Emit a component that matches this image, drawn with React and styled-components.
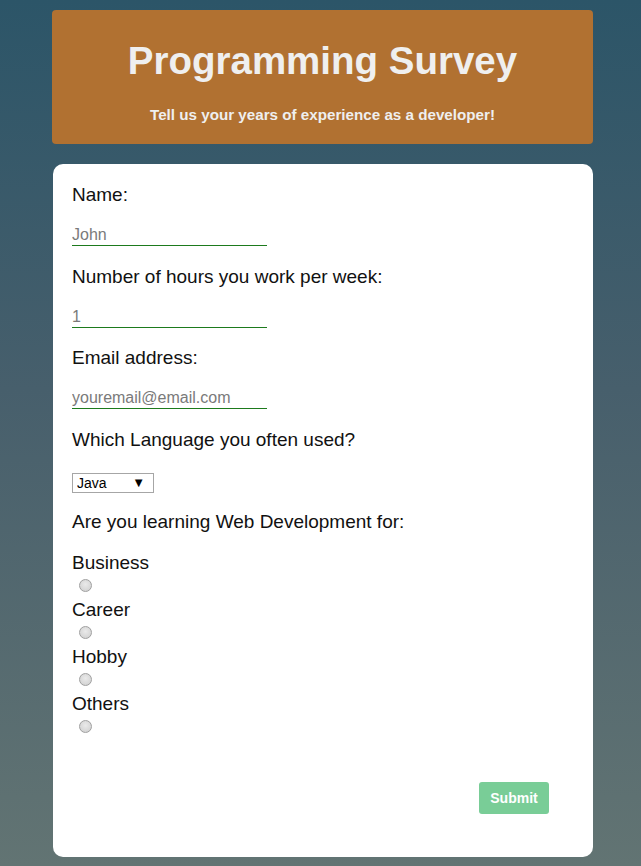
import React from 'react';
import styled, { createGlobalStyle } from 'styled-components';

const GlobalStyle = createGlobalStyle`
  html, body {
    margin: 0;
    padding: 0;
  }
  body {
    min-height: 866px;
    font-family: 'Liberation Sans', Arial, sans-serif;
    background: linear-gradient(to bottom, #2c5568 0%, #475f6c 45%, #627473 100%);
  }
`;

const Page = styled.main`
  padding: 10px 48px 9px 52px;
`;

const Header = styled.header`
  height: 134px;
  box-sizing: border-box;
  padding-top: 27px;
  text-align: center;
  background-color: #b17131;
  border-radius: 4px;
  color: #efefef;
`;

const Title = styled.h1`
  margin: 0;
  font-size: 38.5px;
  line-height: 48px;
  font-weight: 700;
`;

const Subtitle = styled.p`
  margin: 21px 0 0;
  font-size: 15.2px;
  line-height: 18px;
  font-weight: 700;
`;

const Card = styled.form`
  margin-top: 20px;
  margin-left: 1px;
  height: 693px;
  box-sizing: border-box;
  padding: 20px 44px 0 19px;
  background: #fff;
  border-radius: 10px;
  display: flex;
  flex-direction: column;
`;

const Label = styled.label`
  display: block;
  font-size: 19px;
  line-height: 22px;
  color: #111;
  margin-bottom: ${(p) => p.gap || 19}px;
`;

const TextInput = styled.input`
  display: block;
  width: 195px;
  height: 21px;
  box-sizing: border-box;
  padding: 0;
  border: none;
  border-bottom: 1px solid #1d7a1d;
  font-family: inherit;
  font-size: 16px;
  color: #333;
  outline: none;
  margin-bottom: ${(p) => p.gap || 20}px;
  &::placeholder {
    color: #7a7a7a;
  }
`;

const SelectWrap = styled.div`
  position: relative;
  width: 82px;
  height: 20px;
  margin-bottom: 18px;
`;

const Select = styled.select`
  appearance: none;
  width: 82px;
  height: 20px;
  box-sizing: border-box;
  padding: 0 0 0 4px;
  border: 1px solid #a6a6a6;
  border-radius: 0;
  background: #fff;
  font-family: inherit;
  font-size: 14px;
  color: #000;
`;

const Arrow = styled.span`
  position: absolute;
  right: 9px;
  top: 2px;
  font-size: 13px;
  line-height: 15px;
  color: #000;
  pointer-events: none;
`;

const Option = styled.div`
  display: flex;
  flex-direction: column;
`;

const OptionLabel = styled.span`
  font-size: 19px;
  line-height: 22px;
  color: #111;
`;

const Radio = styled.input`
  appearance: none;
  width: 13px;
  height: 13px;
  margin: 5px 0 7px 7px;
  box-sizing: border-box;
  border: 1px solid #a0a0a0;
  border-radius: 50%;
  background: radial-gradient(circle at 50% 40%, #eaeaea 0%, #d6d6d6 70%, #cfcfcf 100%);
`;

const Footer = styled.div`
  display: flex;
  justify-content: flex-end;
  margin-top: 42px;
`;

const SubmitButton = styled.button`
  width: 70px;
  height: 32px;
  border: none;
  border-radius: 3px;
  background: #79cd97;
  color: #fff;
  font-family: inherit;
  font-size: 14px;
  font-weight: 700;
`;

const reasons = ['Business', 'Career', 'Hobby', 'Others'];

export default function App() {
  return (
    <>
      <GlobalStyle />
      <Page>
        <Header>
          <Title>Programming Survey</Title>
          <Subtitle>Tell us your years of experience as a developer!</Subtitle>
        </Header>
        <Card onSubmit={(e) => e.preventDefault()}>
          <Label htmlFor="name">Name:</Label>
          <TextInput id="name" type="text" placeholder="John" />

          <Label htmlFor="hours">Number of hours you work per week:</Label>
          <TextInput id="hours" type="text" placeholder="1" gap={19} />

          <Label htmlFor="email">Email address:</Label>
          <TextInput id="email" type="email" placeholder="youremail@email.com" />

          <Label htmlFor="lang" gap={22}>Which Language you often used?</Label>
          <SelectWrap>
            <Select id="lang" defaultValue="Java">
              <option>Java</option>
              <option>JavaScript</option>
              <option>Python</option>
              <option>C++</option>
            </Select>
            <Arrow>▼</Arrow>
          </SelectWrap>

          <Label>Are you learning Web Development for:</Label>
          {reasons.map((r) => (
            <Option key={r}>
              <OptionLabel>{r}</OptionLabel>
              <Radio type="radio" name="reason" value={r} />
            </Option>
          ))}

          <Footer>
            <SubmitButton type="submit">Submit</SubmitButton>
          </Footer>
        </Card>
      </Page>
    </>
  );
}
